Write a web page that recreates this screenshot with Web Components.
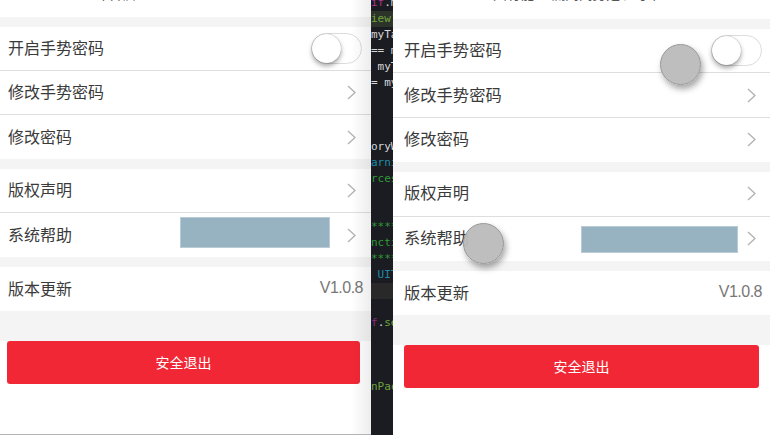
<!DOCTYPE html>
<html lang="zh">
<head>
<meta charset="utf-8">
<title>设置</title>
<style>
    html, body { margin: 0; height: 100%; overflow: hidden; background: #fff; }
    body {
        display: flex;
        height: 435px;
        font-family: "Liberation Sans", "Noto Sans CJK SC", sans-serif;
    }
</style>
</head>
<body>
<settings-panel style="--panel-w: 371px; --row-h: 44px; --pad: 8px; --head-h: 17px; --btn-l: 7px; --btn-r: 11px; --edge: 1; --label-size: 16px; --end-toggle: 9px; --end-chevron: 15px">
    <top-caption style="--cap-left: 97px; --cap-size: 13px; --cap-shift: -15px">未开启</top-caption>
    <section-gap></section-gap>
    <settings-row label="开启手势密码"><toggle-switch slot="end"></toggle-switch></settings-row>
    <settings-row label="修改手势密码"><row-chevron slot="end"></row-chevron></settings-row>
    <settings-row label="修改密码" last><row-chevron slot="end"></row-chevron></settings-row>
    <section-gap></section-gap>
    <settings-row label="版权声明"><row-chevron slot="end"></row-chevron></settings-row>
    <settings-row label="系统帮助" last>
        <mask-box style="left: 180px; top: 4px; width: 150px; height: 31px"></mask-box>
        <row-chevron slot="end"></row-chevron>
    </settings-row>
    <section-gap></section-gap>
    <settings-row label="版本更新" last><version-text slot="end">V1.0.8</version-text></settings-row>
    <section-gap style="--gap-h: 30px"></section-gap>
    <logout-button>安全退出</logout-button>
</settings-panel>

<code-strip></code-strip>

<settings-panel style="--panel-w: 377px; --row-h: 44.4px; --pad: 11px; --head-h: 19px; --btn-l: 11px; --btn-r: 11px; --edge: 0; --label-size: 16.3px; --end-toggle: 8px; --end-chevron: 14px">
    <top-caption style="--cap-left: 100px; --cap-size: 13.7px; --cap-shift: -15px">只有能已 流阔闯势是 起手住</top-caption>
    <section-gap></section-gap>
    <settings-row label="开启手势密码"><toggle-switch slot="end"></toggle-switch></settings-row>
    <settings-row label="修改手势密码"><row-chevron slot="end"></row-chevron></settings-row>
    <settings-row label="修改密码" last><row-chevron slot="end"></row-chevron></settings-row>
    <section-gap></section-gap>
    <settings-row label="版权声明"><row-chevron slot="end"></row-chevron></settings-row>
    <settings-row label="系统帮助" last>
        <mask-box style="left: 188px; top: 9px; width: 157px; height: 27px"></mask-box>
        <row-chevron slot="end"></row-chevron>
    </settings-row>
    <section-gap></section-gap>
    <settings-row label="版本更新" last><version-text slot="end">V1.0.8</version-text></settings-row>
    <section-gap style="--gap-h: 30px"></section-gap>
    <logout-button>安全退出</logout-button>
    <touch-dot style="left: 267px; top: 44px"></touch-dot>
    <touch-dot style="left: 70px; top: 223px"></touch-dot>
</settings-panel>

<script>
class ShadowBase extends HTMLElement {
    constructor() {
        super();
        this.attachShadow({ mode: 'open' });
        this.shadowRoot.innerHTML = this.constructor.markup;
    }
}

class SettingsPanel extends ShadowBase {
    static markup = `
    <style>
        :host {
            display: block;
            position: relative;
            flex: none;
            width: var(--panel-w);
            height: 435px;
            overflow: hidden;
            background: #fff;
            color: #3a3a3a;
        }
        .edge {
            position: absolute;
            top: 0;
            right: 0;
            bottom: 0;
            width: 20px;
            background: linear-gradient(to right, rgba(0,0,0,0), rgba(0,0,0,.07));
            opacity: var(--edge);
        }
        .base {
            position: absolute;
            left: 0;
            right: 0;
            bottom: 0;
            height: 1px;
            background: #b4b4b4;
            opacity: var(--edge);
        }
    </style>
    <slot></slot>
    <div class="edge"></div>
    <div class="base"></div>`;
}

class TopCaption extends ShadowBase {
    static markup = `
    <style>
        :host {
            display: block;
            height: var(--head-h);
            overflow: hidden;
            padding-left: var(--cap-left);
            color: #555;
            font-size: var(--cap-size);
            line-height: 20px;
        }
        div { margin-top: var(--cap-shift); white-space: nowrap; }
    </style>
    <div><slot></slot></div>`;
}

class SectionGap extends ShadowBase {
    static markup = `
    <style>
        :host { display: block; height: var(--gap-h, 10px); background: #f4f4f4; }
    </style>`;
}

class SettingsRow extends ShadowBase {
    static markup = `
    <style>
        :host {
            display: flex;
            position: relative;
            box-sizing: border-box;
            align-items: center;
            justify-content: space-between;
            height: var(--row-h);
            padding-left: var(--pad);
            background: #fff;
            border-bottom: 1px solid #dedede;
            font-size: var(--label-size);
        }
        :host([last]) { border-bottom: 0; }
        .label { padding-bottom: 3px; }
    </style>
    <span class="label"></span>
    <slot></slot>
    <slot name="end"></slot>`;

    connectedCallback() {
        this.shadowRoot.querySelector('.label').textContent = this.getAttribute('label');
    }
}

class ToggleSwitch extends ShadowBase {
    static markup = `
    <style>
        :host {
            display: block;
            position: relative;
            box-sizing: border-box;
            width: 51px;
            height: 31px;
            margin-right: var(--end-toggle);
            border: 1.5px solid #dcdcdc;
            border-radius: 16px;
            background: #fff;
        }
        .knob {
            position: absolute;
            left: -0.5px;
            top: -0.5px;
            width: 29px;
            height: 29px;
            border-radius: 50%;
            background: #fff;
            box-shadow: 0 0 1px rgba(0,0,0,.45), 0 3px 5px rgba(0,0,0,.35);
        }
    </style>
    <div class="knob"></div>`;
}

class RowChevron extends ShadowBase {
    static markup = `
    <style>
        :host { display: block; width: 9px; height: 15px; margin-right: var(--end-chevron); }
        svg { display: block; }
    </style>
    <svg width="9" height="15" viewBox="0 0 9 15">
        <path d="M1 1l7 6.5L1 14" fill="none" stroke="#b5b5b5" stroke-width="1.5"/>
    </svg>`;
}

class VersionText extends ShadowBase {
    static markup = `
    <style>
        :host {
            display: block;
            margin-right: 8px;
            padding-bottom: 2px;
            color: #777;
            font-size: 16px;
            letter-spacing: -0.5px;
        }
    </style>
    <slot></slot>`;
}

class MaskBox extends ShadowBase {
    static markup = `
    <style>
        :host {
            display: block;
            position: absolute;
            box-sizing: border-box;
            background: #97b2c0;
            border: 1px solid #b9ccd6;
        }
    </style>`;
}

class LogoutButton extends ShadowBase {
    static markup = `
    <style>
        :host {
            display: flex;
            box-sizing: border-box;
            align-items: center;
            justify-content: center;
            height: 43px;
            margin-left: var(--btn-l);
            margin-right: var(--btn-r);
            padding-bottom: 2px;
            border-radius: 3px;
            background: #f22735;
            color: #fff;
            font-size: 14px;
        }
    </style>
    <slot></slot>`;
}

class TouchDot extends ShadowBase {
    static markup = `
    <style>
        :host {
            display: block;
            position: absolute;
            box-sizing: border-box;
            width: 41px;
            height: 41px;
            border: 1px solid #989898;
            border-radius: 50%;
            background: rgba(186,186,186,.95);
            box-shadow: 2px 4px 6px rgba(0,0,0,.35);
        }
    </style>`;
}

const CODE_LINES = [
    [['if', '#b0338f'], ['.m', '#d8d8d8']],
    [['iew)', '#6fa33e']],
    [['myTa', '#d8d8d8']],
    [['== m', '#d8d8d8']],
    [[' myT', '#d8d8d8']],
    [['= my', '#d8d8d8']],
    [], [], [],
    [['oryW', '#d8d8d8']],
    [['arni', '#1f8ba8']],
    [['rces', '#2f9a35']],
    [], [],
    [['****', '#2f9a35']],
    [['ncti', '#2f9a35']],
    [['****', '#2f9a35']],
    [[' UIT', '#1f8ba8']],
    [], [],
    [['f', '#8f2a80'], ['.', '#d8d8d8'], ['se', '#6fa33e']],
    [], [], [],
    [['nPac', '#6fa33e']]
];

class CodeStrip extends ShadowBase {
    static markup = `
    <style>
        :host {
            display: block;
            flex: none;
            width: 22px;
            height: 435px;
            overflow: hidden;
            background: #1a1c22;
            font: 11px/16px "DejaVu Sans Mono", monospace;
        }
        .lines { margin-top: -5px; }
        .line { height: 16px; white-space: pre; overflow: hidden; }
        .line.current { background: #29292a; }
        .line.match { background: #2c3328; }
    </style>
    <div class="lines"></div>`;

    connectedCallback() {
        const holder = this.shadowRoot.querySelector('.lines');
        CODE_LINES.forEach((parts, index) => {
            const line = document.createElement('div');
            line.className = 'line';
            if (index === 1) line.classList.add('match');
            if (index === 18) line.classList.add('current');
            parts.forEach(([text, color]) => {
                const span = document.createElement('span');
                span.textContent = text;
                span.style.color = color;
                line.appendChild(span);
            });
            holder.appendChild(line);
        });
    }
}

customElements.define('settings-panel', SettingsPanel);
customElements.define('top-caption', TopCaption);
customElements.define('section-gap', SectionGap);
customElements.define('settings-row', SettingsRow);
customElements.define('toggle-switch', ToggleSwitch);
customElements.define('row-chevron', RowChevron);
customElements.define('version-text', VersionText);
customElements.define('mask-box', MaskBox);
customElements.define('logout-button', LogoutButton);
customElements.define('touch-dot', TouchDot);
customElements.define('code-strip', CodeStrip);
</script>
</body>
</html>
